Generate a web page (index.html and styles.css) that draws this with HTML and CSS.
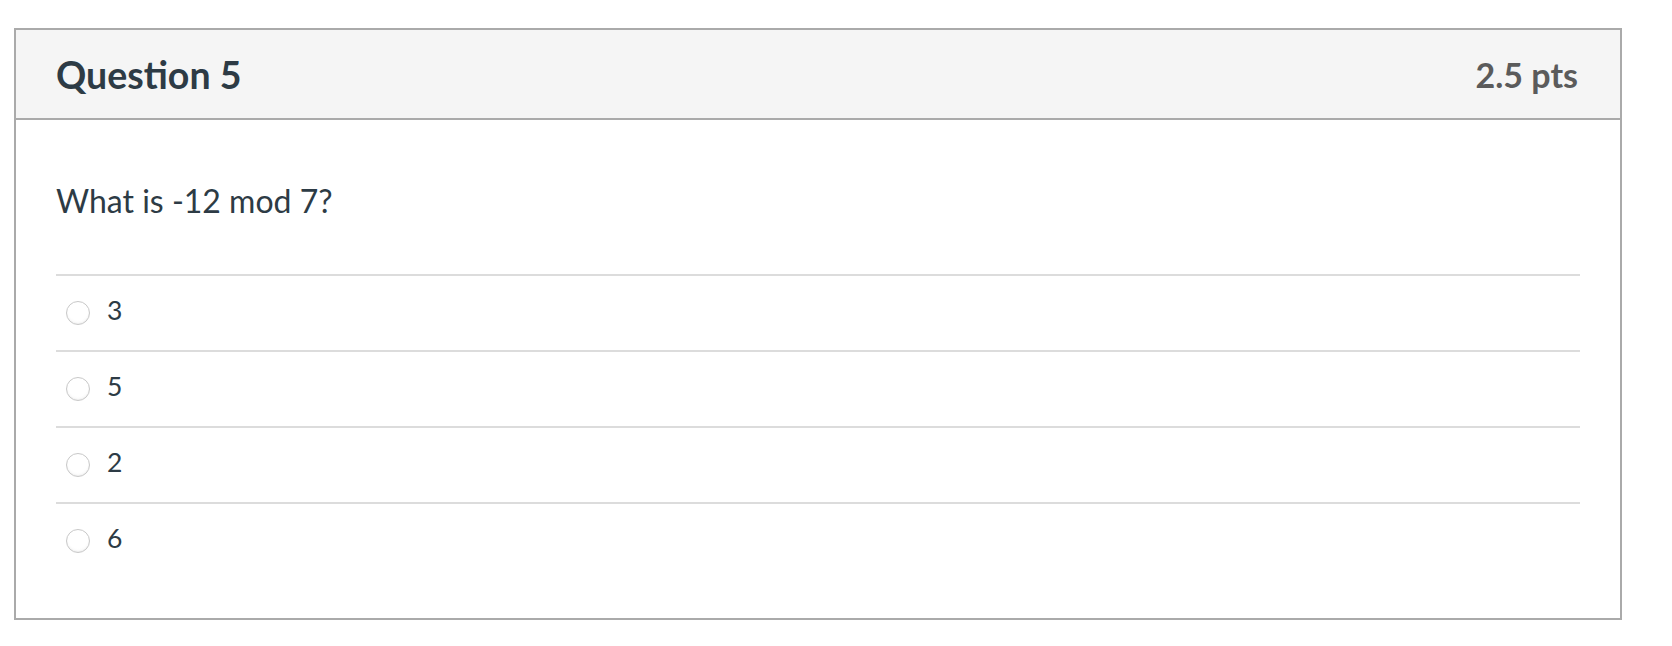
FILE: index.html
```html
<!DOCTYPE html>
<html lang="en">
<head>
<meta charset="utf-8">
<title>Question 5</title>
<link rel="stylesheet" href="styles.css">
</head>
<body>
<div class="page">
  <div class="question">
    <div class="header">
      <span class="name">Question 5</span>
      <span class="points">2.5 pts</span>
    </div>
    <div class="content">
      <div class="question-text">What is -12 mod 7?</div>
      <div class="answers">
        <label class="answer"><span class="radio"></span><span class="answer-text">3</span></label>
        <label class="answer"><span class="radio"></span><span class="answer-text">5</span></label>
        <label class="answer"><span class="radio"></span><span class="answer-text">2</span></label>
        <label class="answer"><span class="radio"></span><span class="answer-text">6</span></label>
      </div>
    </div>
  </div>
</div>
</body>
</html>
```

FILE: styles.css
```css
html, body {
  margin: 0;
  padding: 0;
  background: #ffffff;
}

body {
  font-family: Lato, "Open Sans", "Liberation Sans", sans-serif;
  color: #2d3b45;
}

.page {
  padding: 28px 0 0 14px;
}

.question {
  width: 1604px;
  border: 2px solid #aaaaaa;
  background: #ffffff;
}

.header {
  height: 88px;
  display: flex;
  align-items: center;
  justify-content: space-between;
  padding: 0 42px 0 40px;
  background: #f5f5f5;
  border-bottom: 2px solid #aaaaaa;
}

.name {
  font-size: 37.5px;
  font-weight: 700;
  color: #2d3b45;
}

.points {
  font-size: 34px;
  font-weight: 700;
  color: #5b5b5b;
}

.content {
  padding: 0 40px 40px 40px;
}

.question-text {
  font-size: 32px;
  line-height: 42px;
  padding-top: 60px;
  padding-bottom: 52px;
  color: #2d3b45;
}

.answers {
  display: flex;
  flex-direction: column;
}

.answer {
  height: 74px;
  border-top: 2px solid #dcdcdc;
  display: flex;
  align-items: center;
  padding-left: 10px;
}

.radio {
  width: 22px;
  height: 22px;
  border-radius: 50%;
  border: 1px solid #c8c8c8;
  background: radial-gradient(circle at 50% 40%, #ffffff 55%, #f1f1f1 100%);
  box-shadow: inset 0 -1px 1px rgba(0, 0, 0, 0.04);
  flex: none;
}

.answer-text {
  margin-left: 17px;
  margin-bottom: 6px;
  font-size: 26.5px;
  color: #2d3b45;
}
```
